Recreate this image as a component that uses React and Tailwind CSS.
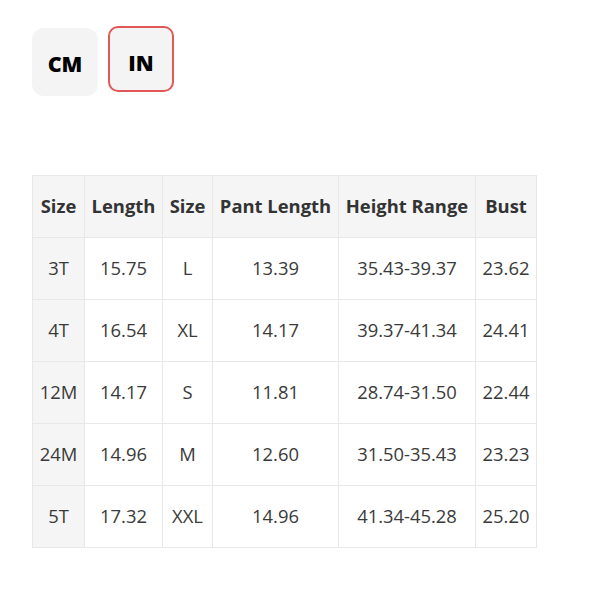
import React from 'react';

const headers = ['Size', 'Length', 'Size', 'Pant Length', 'Height Range', 'Bust'];
const widths = ['w-[52px]', 'w-[78px]', 'w-[50px]', 'w-[126px]', 'w-[137px]', 'w-[61px]'];

const rows = [
  ['3T', '15.75', 'L', '13.39', '35.43-39.37', '23.62'],
  ['4T', '16.54', 'XL', '14.17', '39.37-41.34', '24.41'],
  ['12M', '14.17', 'S', '11.81', '28.74-31.50', '22.44'],
  ['24M', '14.96', 'M', '12.60', '31.50-35.43', '23.23'],
  ['5T', '17.32', 'XXL', '14.96', '41.34-45.28', '25.20'],
];

export default function App() {
  return (
    <div className="min-h-[592px] w-[592px] bg-white font-['Open_Sans',sans-serif]">
      <div className="flex items-start gap-[10px] pl-[32px] pt-[26px]">
        <button className="mt-[2px] flex h-[68px] w-[66px] items-center justify-center rounded-[12px] bg-[#f4f4f4] pt-[5px] text-[21.5px] font-extrabold text-black">
          CM
        </button>
        <button className="flex h-[66px] w-[66px] items-center justify-center rounded-[10px] border-2 border-[#e15858] bg-[#f4f4f4] pt-[9px] text-[21.5px] font-extrabold text-black">
          IN
        </button>
      </div>

      <table className="ml-[32px] mt-[79px] table-fixed border-collapse text-[18.4px]">
        <colgroup>
          {widths.map((w, i) => (
            <col key={i} className={w} />
          ))}
        </colgroup>
        <thead>
          <tr className="h-[62px] bg-[#f5f5f6]">
            {headers.map((h, i) => (
              <th
                key={i}
                className="border border-[#e8e8e8] px-0 pb-[1px] text-center font-bold text-[#333]"
              >
                {h}
              </th>
            ))}
          </tr>
        </thead>
        <tbody>
          {rows.map((r, ri) => (
            <tr key={ri} className="h-[62px]">
              {r.map((c, ci) => (
                <td
                  key={ci}
                  className={`border border-[#e8e8e8] px-0 pb-[1px] text-center text-[#3a3a3a] ${
                    ci === 0 ? 'bg-[#f5f5f6]' : 'bg-white'
                  }`}
                >
                  {c}
                </td>
              ))}
            </tr>
          ))}
        </tbody>
      </table>
    </div>
  );
}
